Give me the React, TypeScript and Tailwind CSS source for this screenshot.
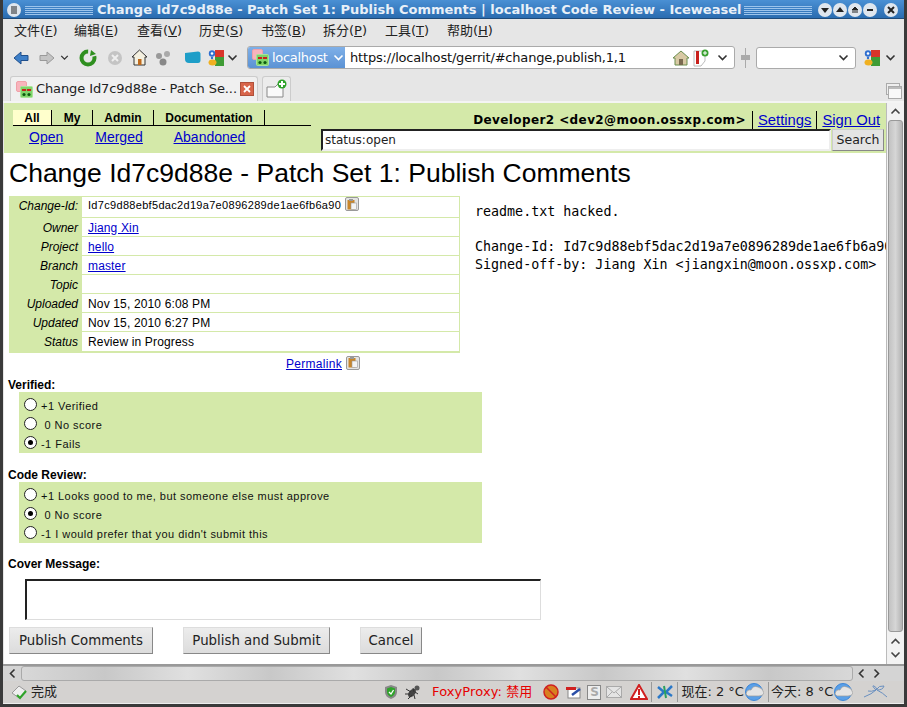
import React from 'react';

const Fav = () => (
  <svg width="17" height="17" viewBox="0 0 17 17" className="shrink-0">
    <rect x="0.5" y="0.5" width="10" height="10" rx="1.5" fill="#f8b4bc" stroke="#f0a0a8" />
    <rect x="4.5" y="5.5" width="12" height="11" rx="1" fill="#7fd46a" stroke="#a8e498" />
    <rect x="6" y="8" width="4" height="2" fill="#c8201c" />
    <rect x="11" y="8" width="4" height="2" fill="#c8201c" />
    <circle cx="8" cy="13.5" r="1.6" fill="#0c5a10" />
    <circle cx="13" cy="13.5" r="1.6" fill="#0c5a10" />
  </svg>
);

const Chev = ({ c = '#333', w = 11 }: { c?: string; w?: number }) => (
  <svg width={w} height="7" viewBox="0 0 11 7" className="shrink-0">
    <path d="M1.5 1.5 L5.5 5.5 L9.5 1.5" fill="none" stroke={c} strokeWidth="1.6" />
  </svg>
);

const Google = () => (
  <svg width="16" height="18" viewBox="0 0 16 18" className="shrink-0">
    <rect x="7" y="1" width="9" height="8" fill="#d8352a" />
    <rect x="7" y="8" width="9" height="9" fill="#3f9c35" />
    <circle cx="4" cy="4.5" r="3.2" fill="#2f6fd0" />
    <circle cx="4" cy="4.5" r="1.3" fill="#fff" />
    <ellipse cx="4.5" cy="13.5" rx="4" ry="3" fill="#f0b020" />
    <circle cx="4" cy="9" r="1.2" fill="#2f6fd0" />
  </svg>
);

const Copy = () => (
  <span className="inline-flex w-[14px] h-[14px] items-center justify-center border border-[#999] bg-[#e4e4e4] rounded-[2px] shrink-0">
    <svg width="10" height="11" viewBox="0 0 10 11">
      <rect x="0.5" y="1" width="7" height="9.5" fill="#c8862c" />
      <rect x="2" y="0" width="4" height="2" fill="#999" />
      <rect x="4" y="4" width="5.5" height="6.5" fill="#f4f4f4" stroke="#999" strokeWidth="0.6" />
    </svg>
  </span>
);

const Stripes = ({ w }: { w: number }) => (
  <div className="flex flex-col gap-[1px]" style={{ width: w }}>
    {[0, 1, 2, 3, 4].map((i) => (
      <div key={i} className="h-[1px] bg-[#9cc4ec]" />
    ))}
  </div>
);

const WinBtn = ({ d, ml = 'ml-0' }: { d: React.ReactNode; ml?: string }) => (
  <span className={`w-[14px] h-[14px] rounded-full bg-[#dfe6ee] flex items-center justify-center ${ml}`}>
    <svg width="10" height="10" viewBox="0 0 10 10">{d}</svg>
  </span>
);

const Menu = () => (
  <div className="h-[23px] shrink-0 flex items-center text-[13px] text-[#222]">
    {[
      ['文件(', 'F', ')', 'w-[60px] ml-[11px]'],
      ['编辑(', 'E', ')', 'w-[63px]'],
      ['查看(', 'V', ')', 'w-[62px]'],
      ['历史(', 'S', ')', 'w-[62px]'],
      ['书签(', 'B', ')', 'w-[62px]'],
      ['拆分(', 'P', ')', 'w-[62px]'],
      ['工具(', 'T', ')', 'w-[62px]'],
      ['帮助(', 'H', ')', 'w-[62px]'],
    ].map(([a, b, c, cl]) => (
      <span key={b} className={cl}>
        {a}
        <span className="underline">{b}</span>
        {c}
      </span>
    ))}
  </div>
);

const NavBar = () => (
  <div className="h-[27px] mt-[2px] shrink-0 flex items-center">
    <svg width="16" height="14" viewBox="0 0 16 14" className="ml-[10px]">
      <path d="M1 7 L8 1 V4.5 H15 V9.5 H8 V13 Z" fill="#3d7fc8" stroke="#1f4f8c" />
    </svg>
    <svg width="16" height="14" viewBox="0 0 16 14" className="ml-[10px]">
      <path d="M15 7 L8 1 V4.5 H1 V9.5 H8 V13 Z" fill="#c4c4c4" stroke="#999" />
    </svg>
    <span className="ml-[5px]"><Chev w={9} /></span>
    <svg width="18" height="18" viewBox="0 0 18 18" className="ml-[10px]">
      <circle cx="9" cy="9" r="6.5" fill="none" stroke="#2f8f1f" strokeWidth="4" strokeDasharray="30 8" />
      <path d="M12 1 L17 5 L11 7 Z" fill="#2f8f1f" />
    </svg>
    <svg width="16" height="16" viewBox="0 0 16 16" className="ml-[10px]">
      <circle cx="8" cy="8" r="7" fill="#c4c4c4" />
      <path d="M5 5 L11 11 M11 5 L5 11" stroke="#eee" strokeWidth="2" />
    </svg>
    <svg width="17" height="17" viewBox="0 0 17 17" className="ml-[8px]">
      <path d="M8.5 1 L16 8 H14 V16 H3 V8 H1 Z" fill="#f4f0e0" stroke="#333" />
      <rect x="7" y="10" width="3.5" height="6" fill="#c06a1c" />
    </svg>
    <svg width="16" height="16" viewBox="0 0 16 16" className="ml-[7px]">
      <circle cx="4" cy="6" r="3" fill="#999" />
      <circle cx="12" cy="4" r="3" fill="#aaa" />
      <circle cx="8" cy="12" r="3.5" fill="#888" />
    </svg>
    <svg width="17" height="13" viewBox="0 0 17 13" className="ml-[13px]">
      <path d="M1 2 L14 0.5 Q16.5 0.5 16.5 3 V9 Q16.5 12 14 12 H5 Q1 12 1 8 Z" fill="#1e9ec8" />
    </svg>
    <span className="ml-[7px]"><Google /></span>
    <span className="ml-[3px]"><Chev /></span>
    <div className="ml-[9px] w-[488px] h-[23px] flex items-center border border-[#aaa] rounded-[3px] bg-white overflow-hidden">
      <div className="w-[97px] h-full flex items-center bg-gradient-to-b from-[#7fb0e8] to-[#5b92d4] shrink-0 pl-[4px] text-white text-[13px] tracking-[-0.3px]">
        <Fav />
        <span className="ml-[3px]">localhost</span>
        <span className="ml-[5px]"><Chev c="#fff" /></span>
      </div>
      <span className="ml-[5px] text-[13px] text-[#111] flex-1 tracking-[-0.18px] whitespace-nowrap">https://localhost/gerrit/#change,publish,1,1</span>
      <svg width="18" height="16" viewBox="0 0 18 16">
        <path d="M9 1 L17 8 H15 V15 H3 V8 H1 Z" fill="#d8c9a4" stroke="#6b8e4e" />
        <rect x="7" y="9" width="4" height="6" fill="#7a6a50" />
      </svg>
      <svg width="16" height="18" viewBox="0 0 16 18" className="ml-[3px]">
        <path d="M1 2 H12 V12 L8 17 H1 Z" fill="#fff" stroke="#bbb" />
        <rect x="3" y="2" width="3" height="13" fill="#c8201c" />
        <circle cx="12" cy="4" r="3.5" fill="#3aa030" />
        <path d="M12 2 V6 M10 4 H14" stroke="#fff" />
      </svg>
      <span className="ml-[8px] mr-[6px]"><Chev /></span>
    </div>
    <div className="ml-[10px] w-[1px] h-[20px] bg-[#aaa] relative">
      <span className="absolute top-[7px] -left-[4px] w-[9px] h-[5px] bg-[#aaa]" />
    </div>
    <div className="ml-[10px] w-[100px] h-[22px] flex items-center justify-end pr-[6px] border border-[#aaa] rounded-[3px] bg-white">
      <Chev />
    </div>
    <span className="ml-[8px]"><Google /></span>
    <span className="ml-[5px]"><Chev /></span>
  </div>
);

const TabBar = () => (
  <div className="h-[30px] shrink-0 flex items-end pl-[7px] relative">
    <div className="w-[248px] h-[25px] flex items-center pl-[5px] bg-[#f0f0f0] border border-b-0 border-[#ccc] rounded-t-[3px] text-[13px] text-[#222]">
      <Fav />
      <span className="ml-[3px] flex-1 whitespace-nowrap overflow-hidden tracking-[-0.1px]">Change Id7c9d88e - Patch Se...</span>
      <span className="mr-[3px] w-[14px] h-[14px] shrink-0 flex items-center justify-center bg-[#d8654a] border border-[#b0503a]">
        <svg width="8" height="8" viewBox="0 0 8 8"><path d="M1 1 L7 7 M7 1 L1 7" stroke="#fff" strokeWidth="1.8" /></svg>
      </span>
    </div>
    <div className="ml-[4px] w-[29px] h-[25px] flex items-center justify-center bg-[#ececec] border border-b-0 border-[#ccc] rounded-t-[3px]">
      <svg width="22" height="20" viewBox="0 0 22 20">
        <path d="M1 8 H9 L12 5 H17 V18 H1 Z" fill="#fafafa" stroke="#888" />
        <circle cx="16" cy="5" r="4.5" fill="#2fa32a" />
        <path d="M16 2 V8 M13 5 H19" stroke="#fff" strokeWidth="2" />
      </svg>
    </div>
    <svg width="16" height="16" viewBox="0 0 16 16" className="absolute right-[2px] bottom-[2px]">
      <rect x="0.5" y="0.5" width="13" height="11" fill="#eee" stroke="#aaa" />
      <rect x="2.5" y="3.5" width="13" height="12" fill="#f8f8f8" stroke="#aaa" />
      <rect x="3" y="4" width="12" height="2" fill="#bbb" />
    </svg>
  </div>
);

const TopTab = ({ t, cl, active }: { t: string; cl: string; active?: boolean }) => (
  <span className={`h-[15px] flex items-center justify-center font-bold text-[12px] border-r border-black ${cl} ${active ? 'bg-[#ffffcc]' : ''}`}>{t}</span>
);

const Header = () => (
  <div className="h-[50px] bg-[#d4e9a9] flex font-['Liberation_Sans',sans-serif] text-black">
    <div className="w-[317px] shrink-0 pl-[9px] pt-[7px]">
      <div className="flex w-[298px] border-b border-black h-[16px]">
        <TopTab t="All" cl="w-[39px]" active />
        <TopTab t="My" cl="w-[41px]" />
        <TopTab t="Admin" cl="w-[61px]" />
        <TopTab t="Documentation" cl="w-[111px]" />
      </div>
      <div className="flex text-[14px] leading-[20px] text-[#0000cc] underline mt-[1px]">
        <a className="ml-[16px]">Open</a>
        <a className="ml-[32px]">Merged</a>
        <a className="ml-[31px]">Abandoned</a>
      </div>
    </div>
    <div className="flex-1 flex flex-col">
      <div className="h-[26px] flex items-end justify-end pr-[6px] text-[14.8px] leading-[18px]">
        <span className="font-bold font-['DejaVu_Sans',sans-serif] text-[12px] tracking-[0.4px]">Developer2 &lt;dev2@moon.ossxp.com&gt;</span>
        <a className="ml-[6px] pl-[5px] border-l border-black text-[#0000cc] underline">Settings</a>
        <a className="ml-[5px] pl-[5px] border-l border-black text-[#0000cc] underline">Sign Out</a>
      </div>
      <div className="flex h-[22px] pr-[2px]">
        <div className="flex-1 bg-white border-2 border-t-[#222] border-l-[#222] border-r-[#eee] border-b-[#eee] flex items-center pl-[2px] text-[12px] font-['DejaVu_Sans',sans-serif] text-[#222]">status:open</div>
        <div className="w-[52px] ml-[1px] bg-[#e4e4e4] border border-[#ccc] border-r-[#888] border-b-[#888] flex items-center justify-center text-[12.5px] font-['DejaVu_Sans',sans-serif] text-[#222]">Search</div>
      </div>
    </div>
  </div>
);

const rows: [string, React.ReactNode][] = [
  ['Change-Id:', <span className="flex items-center text-[11px] tracking-[0.31px] -mt-[3px]">Id7c9d88ebf5dac2d19a7e0896289de1ae6fb6a90<span className="ml-[4px]"><Copy /></span></span>],
  ['Owner', <a className="text-[#0000cc] underline">Jiang Xin</a>],
  ['Project', <a className="text-[#0000cc] underline">hello</a>],
  ['Branch', <a className="text-[#0000cc] underline">master</a>],
  ['Topic', null],
  ['Uploaded', 'Nov 15, 2010 6:08 PM'],
  ['Updated', 'Nov 15, 2010 6:27 PM'],
  ['Status', 'Review in Progress'],
];

const InfoTable = () => (
  <div className="w-[451px] border border-[#d4e9a9] border-b-2 text-[12px]">
    {rows.map(([l, v], i) => (
      <div key={l} className={`flex ${i === 0 ? 'h-[21px]' : 'h-[19px]'} ${i < rows.length - 1 ? 'border-b border-[#d4e9a9]' : ''}`}>
        <div className={`w-[72px] bg-[#d4e9a9] text-right pr-[4px] italic shrink-0 ${i === 0 ? 'leading-[19px]' : 'leading-[20px]'}`}>{l}</div>
        <div className={`pl-[6px] flex items-center tracking-[0.15px] ${i === 0 ? '' : 'pt-[1px]'}`}>{v}</div>
      </div>
    ))}
  </div>
);

const Radio = ({ on }: { on?: boolean }) => (
  <span className="w-[13px] h-[13px] rounded-full border-[1.5px] border-[#222] bg-white flex items-center justify-center shrink-0">
    {on && <span className="w-[5px] h-[5px] rounded-full bg-black" />}
  </span>
);

const Vote = ({ title, opts, sel, mt }: { title: string; opts: string[]; sel: number; mt: string }) => (
  <div>
    <div className={`text-[12px] font-bold leading-[14px] ml-[4px] ${mt}`}>{title}</div>
    <div className="ml-[15px] w-[463px] bg-[#d4e9a9] pl-[5px] text-[11px] tracking-[0.46px]">
      {opts.map((o, i) => (
        <div key={o} className="h-[19px] flex">
          <span className="mt-[6px] h-[13px]"><Radio on={i === sel} /></span>
          <span className="ml-[4px] mt-[8px] leading-[13px] whitespace-pre text-[#111]">{o}</span>
        </div>
      ))}
      <div className="h-[4px]" />
    </div>
  </div>
);

const Btn = ({ t, cl }: { t: string; cl: string }) => (
  <div className={`h-[27px] flex items-center justify-center bg-gradient-to-b from-[#ececec] to-[#dcdcdc] border border-[#ddd] border-r-[#888] border-b-[#888] text-[13.33px] text-[#222] font-['DejaVu_Sans',sans-serif] ${cl}`}>{t}</div>
);

const VScroll = () => (
  <div className="w-[18px] shrink-0 bg-[#f2f2f2] flex flex-col items-center border-l border-[#bbb]">
    <div className="h-[16px] flex items-center">
      <svg width="11" height="7" viewBox="0 0 11 7"><path d="M1.5 5.5 L5.5 1.5 L9.5 5.5" fill="none" stroke="#444" strokeWidth="1.6" /></svg>
    </div>
    <div className="w-[15px] h-[512px] mt-[1px] rounded-[3px] border border-[#999] bg-gradient-to-r from-[#c2c2c2] via-[#d6d6d6] to-[#b4b4b4]" />
    <div className="mt-[6px] flex flex-col gap-[6px] items-center">
      <svg width="11" height="7" viewBox="0 0 11 7"><path d="M1.5 5.5 L5.5 1.5 L9.5 5.5" fill="none" stroke="#444" strokeWidth="1.6" /></svg>
      <Chev c="#444" />
    </div>
  </div>
);

const HScroll = () => (
  <div className="h-[17px] shrink-0 bg-[#d4d4d4] border-t-2 border-[#999] flex items-center">
    <svg width="7" height="11" viewBox="0 0 7 11" className="ml-[6px]"><path d="M5.5 1.5 L1.5 5.5 L5.5 9.5" fill="none" stroke="#333" strokeWidth="1.6" /></svg>
    <div className="ml-[5px] w-[832px] h-[15px] rounded-[3px] border border-[#aaa] bg-[linear-gradient(90deg,#d8d8d8,#c8c8c8_10%,#e0e0e0_20%,#c8c8c8_30%,#e0e0e0_40%,#c8c8c8_50%,#e0e0e0_60%,#c8c8c8_70%,#e0e0e0_80%,#c8c8c8_90%,#d8d8d8)]" />
    <svg width="7" height="11" viewBox="0 0 7 11" className="ml-[5px]"><path d="M5.5 1.5 L1.5 5.5 L5.5 9.5" fill="none" stroke="#333" strokeWidth="1.6" /></svg>
    <svg width="7" height="11" viewBox="0 0 7 11" className="ml-[8px]"><path d="M1.5 1.5 L5.5 5.5 L1.5 9.5" fill="none" stroke="#333" strokeWidth="1.6" /></svg>
  </div>
);

const Cloud = () => (
  <svg width="20" height="20" viewBox="0 0 20 20" className="shrink-0">
    <circle cx="10" cy="10" r="8.5" fill="#5aa0e8" stroke="#3c86d8" strokeWidth="1" />
    <path d="M2 12 Q3 7 7 8 Q9 3 14 5 Q19 6 20 11 Q19 14 15 14 H4 Z" fill="#e4e4e4" stroke="#999" strokeWidth="0.7" />
  </svg>
);

const Status = () => (
  <div className="h-[23px] shrink-0 bg-[#d4d2d0] flex items-center text-[13px] text-[#222] border-b border-[#eee]">
    <svg width="16" height="16" viewBox="0 0 16 16" className="ml-[8px]">
      <path d="M1 9 L8 2 L15 7 L8 14 Z" fill="#eee" stroke="#999" />
      <path d="M6 11 L9 14 L15 7" fill="none" stroke="#2fa32a" strokeWidth="2.2" />
    </svg>
    <span className="ml-[4px]">完成</span>
    <svg width="14" height="16" viewBox="0 0 14 16" className="ml-[327px]">
      <path d="M7 1 L13 3 V8 Q13 13 7 15 Q1 13 1 8 V3 Z" fill="#888" />
      <path d="M7 3 L11 4.5 V8 Q11 11 7 13 Q3 11 3 8 V4.5 Z" fill="#2fa32a" />
      <path d="M5 8 L7 10 L9.5 6" fill="none" stroke="#fff" strokeWidth="1.3" />
    </svg>
    <svg width="18" height="18" viewBox="0 0 18 18" className="ml-[6px]">
      <ellipse cx="8" cy="10" rx="3" ry="5" fill="#444" transform="rotate(40 8 10)" />
      <circle cx="13" cy="5" r="2.5" fill="#555" />
      <path d="M2 6 L7 9 M1 11 L6 11 M4 16 L8 12 M9 5 L10 9 M14 11 L11 9 M11 16 L10 12" stroke="#333" />
    </svg>
    <span className="ml-[10px] text-[#e60000] tracking-[0.1px]">FoxyProxy: 禁用</span>
    <svg width="16" height="16" viewBox="0 0 16 16" className="ml-[11px]">
      <circle cx="8" cy="8" r="7" fill="#d88020" stroke="#d02020" strokeWidth="1.5" />
      <path d="M3 3 L13 13" stroke="#d02020" strokeWidth="1.5" />
    </svg>
    <svg width="16" height="14" viewBox="0 0 16 14" className="ml-[7px]">
      <rect x="2" y="3" width="12" height="10" fill="#fff" stroke="#888" />
      <rect x="0" y="2" width="10" height="3" fill="#d02020" />
      <path d="M6 10 L14 4" stroke="#2a4fa8" strokeWidth="2.5" />
    </svg>
    <span className="ml-[5px] w-[14px] h-[15px] border border-[#888] bg-[#eee] flex items-center justify-center text-[12px] text-[#aaa] font-bold">S</span>
    <svg width="16" height="12" viewBox="0 0 16 12" className="ml-[5px]">
      <rect x="0.5" y="0.5" width="15" height="11" fill="#e4e4e4" stroke="#aaa" />
      <path d="M1 1 L8 7 L15 1 M1 11 L6 6 M15 11 L10 6" fill="none" stroke="#aaa" />
    </svg>
    <svg width="18" height="16" viewBox="0 0 18 16" className="ml-[8px]">
      <path d="M9 1 L17 15 H1 Z" fill="#fff" stroke="#d02020" strokeWidth="2" />
      <rect x="8" y="5" width="2" height="6" fill="#d02020" />
      <rect x="8" y="12" width="2" height="2" fill="#d02020" />
    </svg>
    <span className="ml-[3px] w-[1px] h-[20px] bg-[#999]" />
    <svg width="18" height="16" viewBox="0 0 18 16" className="ml-[4px]">
      <path d="M2 3 L8 8 L2 14 M16 2 L10 8 L16 12" fill="none" stroke="#2a78c8" strokeWidth="2.5" />
      <path d="M8 2 L10 14" stroke="#2aa060" strokeWidth="2" />
    </svg>
    <span className="ml-[3px] w-[1px] h-[20px] bg-[#999]" />
    <span className="ml-[3px]">现在: 2 °C</span>
    <Cloud />
    <span className="ml-[4px] w-[1px] h-[20px] bg-[#999]" />
    <span className="ml-[2px]">今天: 8 °C</span>
    <Cloud />
    <svg width="26" height="16" viewBox="0 0 26 16" className="ml-[10px]">
      <path d="M1 13 Q9 10 13 6 Q8 1 11 2 Q15 4 13 6 Q16 1 21 2 Q20 6 14 6 Q20 9 24 13 M13 6 Q8 8 5 7" fill="none" stroke="#6a90c0" />
    </svg>
  </div>
);

export default function App() {
  return (
    <div className="w-[907px] h-[707px] flex flex-col overflow-hidden bg-[#e6e6e6] font-['DejaVu_Sans','Noto_Sans_CJK_SC',sans-serif] border-x-[3px] border-b-[3px] border-[#3a3a3a]">
      <div className="-mx-[3px] h-[19px] pt-[2px] shrink-0 bg-gradient-to-b from-[#4a90d4] to-[#2a6cb0] flex items-center border-b border-[#1f4a78]">
        <span className="ml-[7px] w-[14px] h-[14px] rounded-full bg-[#dfe6ee] flex items-center justify-center">
          <svg width="10" height="10" viewBox="0 0 10 10"><path d="M2 2 H8 M2 4 H8 M2 6 H8 M2 8 H8" stroke="#222" /></svg>
        </span>
        <div className="ml-[4px]"><Stripes w={68} /></div>
        <span className="ml-[4px] text-[13px] font-bold text-[#e8f0f8] whitespace-nowrap w-[647px]">Change Id7c9d88e - Patch Set 1: Publish Comments | localhost Code Review - Iceweasel</span>
        <Stripes w={68} />
        <div className="ml-[6px] flex gap-[1px]">
          <WinBtn d={<path d="M1 3 H9 L5 8 Z" fill="#222" />} />
          <WinBtn d={<path d="M1 7 H9 L5 2 Z" fill="#222" />} />
          <WinBtn d={<><path d="M2 5 H8 L5 2 Z M2 7 H8" fill="#222" stroke="#222" /></>} />
          <WinBtn d={<path d="M2 5 H8" stroke="#222" strokeWidth="2" />} />
          <WinBtn ml="ml-[6px]" d={<path d="M2 2 L8 8 M8 2 L2 8" stroke="#222" strokeWidth="2" />} />
        </div>
      </div>
      <Menu />
      <NavBar />
      <TabBar />
      <div className="flex-1 flex min-h-0 pl-[1px] border-t-2 border-[#f4f4f4]">
        <div className="flex-1 min-w-0 bg-white font-['Liberation_Sans',sans-serif] text-black overflow-hidden">
          <Header />
          <h1 className="text-[26.5px] leading-[30px] font-normal ml-[5px] mt-[5px] whitespace-nowrap">Change Id7c9d88e - Patch Set 1: Publish Comments</h1>
          <div className="flex mt-[8px]">
            <div className="ml-[5px] w-[451px] shrink-0">
              <InfoTable />
              <div className="flex items-center justify-end mr-[100px] mt-[2px] h-[18px] text-[12px]">
                <a className="text-[#0000cc] underline tracking-[0.3px]">Permalink</a>
                <span className="ml-[4px]"><Copy /></span>
              </div>
            </div>
            <pre className="ml-[15px] mt-[7px] font-['DejaVu_Sans_Mono',monospace] text-[13.33px] leading-[17.7px] whitespace-pre">
              {'readme.txt hacked.\n\nChange-Id: Id7c9d88ebf5dac2d19a7e0896289de1ae6fb6a90\nSigned-off-by: Jiang Xin <jiangxin@moon.ossxp.com>'}
            </pre>
          </div>
          <Vote title="Verified:" sel={2} mt="mt-[5px]" opts={['+1 Verified', ' 0 No score', '-1 Fails']} />
          <Vote title="Code Review:" sel={1} mt="mt-[15px]" opts={['+1 Looks good to me, but someone else must approve', ' 0 No score', "-1 I would prefer that you didn't submit this"]} />
          <div className="text-[12px] font-bold leading-[17px] ml-[4px] mt-[13px]">Cover Message:</div>
          <div className="ml-[21px] mt-[6px] w-[516px] h-[41px] bg-white border-t-2 border-l-2 border-t-[#222] border-l-[#222] border-r border-b border-r-[#ddd] border-b-[#ddd]" />
          <div className="flex ml-[5px] mt-[7px] gap-[30px]">
            <Btn t="Publish Comments" cl="w-[144px]" />
            <Btn t="Publish and Submit" cl="w-[147px]" />
            <Btn t="Cancel" cl="w-[62px]" />
          </div>
        </div>
        <VScroll />
      </div>
      <HScroll />
      <Status />
    </div>
  );
}
